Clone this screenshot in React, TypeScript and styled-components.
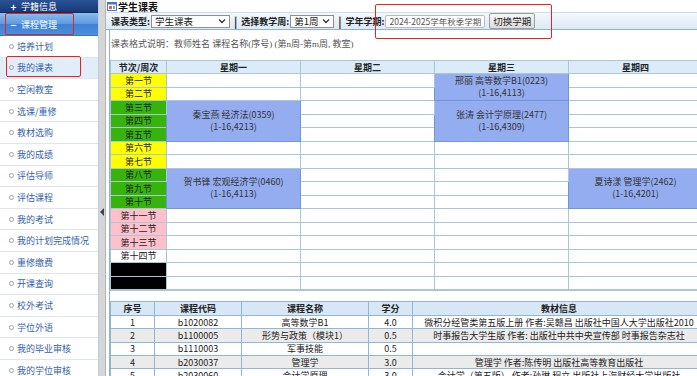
import styled, { createGlobalStyle } from 'styled-components';

type Tone = 'yellow' | 'green' | 'pink' | 'white' | 'black';

interface Course {
  start: number;
  span: number;
  title: string;
  info: string;
}

const menuItems = [
  '培养计划',
  '我的课表',
  '空闲教室',
  '选课/重修',
  '教材选购',
  '我的成绩',
  '评估导师',
  '评估课程',
  '我的考试',
  '我的计划完成情况',
  '重修缴费',
  '开课查询',
  '校外考试',
  '学位外语',
  '我的毕业审核',
  '我的学位审核',
];

const periods: { label: string; tone: Tone }[] = [
  { label: '第一节', tone: 'yellow' },
  { label: '第二节', tone: 'yellow' },
  { label: '第三节', tone: 'green' },
  { label: '第四节', tone: 'green' },
  { label: '第五节', tone: 'green' },
  { label: '第六节', tone: 'yellow' },
  { label: '第七节', tone: 'yellow' },
  { label: '第八节', tone: 'green' },
  { label: '第九节', tone: 'green' },
  { label: '第十节', tone: 'green' },
  { label: '第十一节', tone: 'pink' },
  { label: '第十二节', tone: 'pink' },
  { label: '第十三节', tone: 'pink' },
  { label: '第十四节', tone: 'white' },
  { label: '', tone: 'black' },
  { label: '', tone: 'black' },
];

// only the four days that fit in the visible width
const days = ['星期一', '星期二', '星期三', '星期四'];

const courses: Course[][] = [
  [
    { start: 2, span: 3, title: '秦宝燕 经济法(0359)', info: '(1-16,4213)' },
    { start: 7, span: 3, title: '贺书锋 宏观经济学(0460)', info: '(1-16,4113)' },
  ],
  [],
  [
    { start: 0, span: 2, title: '邢丽 高等数学B1(0223)', info: '(1-16,4113)' },
    { start: 2, span: 3, title: '张涛 会计学原理(2477)', info: '(1-16,4309)' },
  ],
  [{ start: 7, span: 3, title: '夏诗漾 管理学(2462)', info: '(1-16,4201)' }],
];

const books = [
  ['1', 'b1020082', '高等数学B1', '4.0', '微积分经管类第五版上册 作者:吴赣昌 出版社中国人大学出版社2010'],
  ['2', 'b1100005', '形势与政策（模块1）', '0.5', '时事报告大学生版 作者: 出版社中共中央宣传部 时事报告杂志社'],
  ['3', 'b1110003', '军事技能', '0.5', ''],
  ['4', 'b2030037', '管理学', '3.0', '管理学 作者:陈传明 出版社高等教育出版社'],
  ['5', 'b2030060', '会计学原理', '3.0', '会计学（第五版） 作者:孙琳 程立 出版社上海财经大学出版社'],
];

const toneColors: Record<Tone, string> = {
  yellow: '#ffff00',
  green: '#36b40c',
  pink: '#ffc0cb',
  white: '#ffffff',
  black: '#000000',
};

function Chevron() {
  return (
    <svg width="8" height="6" viewBox="0 0 8 6">
      <path d="M1 1.5 L4 4.5 L7 1.5" fill="none" stroke="#333" strokeWidth="1.3" />
    </svg>
  );
}

function WindowIcon() {
  return (
    <svg width="10" height="9" viewBox="0 0 10 9">
      <rect x="0.5" y="0.5" width="9" height="8" fill="#fff" stroke="#4a78c0" />
      <rect x="0.5" y="0.5" width="9" height="2" fill="#4a78c0" />
      <rect x="2" y="4" width="3" height="3" fill="#e05a6a" />
      <rect x="6" y="4" width="2" height="3" fill="#7aa3e0" />
    </svg>
  );
}

function ScheduleRows() {
  return (
    <>
      {periods.map((p, r) => (
        <tr key={r}>
          <PeriodCell $tone={p.tone}>{p.label}</PeriodCell>
          {days.map((_, d) => {
            const list = courses[d];
            const starting = list.find((c) => c.start === r);
            if (starting) {
              return (
                <CourseCell key={d} rowSpan={starting.span}>
                  {starting.title}
                  <br />
                  {starting.info}
                </CourseCell>
              );
            }
            const covered = list.some((c) => r > c.start && r < c.start + c.span);
            if (covered) return null;
            return <DayCell key={d} />;
          })}
        </tr>
      ))}
    </>
  );
}

export default function App() {
  return (
    <Page>
      <GlobalStyle />
      <Sidebar>
        <GroupHeader $variant="dark">
          <Sign>+</Sign>学籍信息
        </GroupHeader>
        <GroupHeader $variant="open">
          <Sign>−</Sign>课程管理
        </GroupHeader>
        {menuItems.map((m) => (
          <MenuItem key={m} $active={m === '我的课表'}>
            <Bullet />
            {m}
          </MenuItem>
        ))}
      </Sidebar>
      <Splitter>
        <Arrow />
      </Splitter>
      <Main>
        <TitleBar>
          <WindowIcon />
          学生课表
        </TitleBar>
        <Toolbar>
          <FieldLabel>课表类型:</FieldLabel>
          <SelectBox $width={79}>
            学生课表
            <Chevron />
          </SelectBox>
          <Divider>|</Divider>
          <FieldLabel>选择教学周:</FieldLabel>
          <SelectBox $width={44}>
            第1周
            <Chevron />
          </SelectBox>
          <Divider>|</Divider>
          <FieldLabel>学年学期:</FieldLabel>
          <SemesterInput>2024-2025学年秋季学期</SemesterInput>
          <SwitchButton>切换学期</SwitchButton>
        </Toolbar>
        <Content>
          <ScheduleSection>
            <Note>课表格式说明：教师姓名 课程名称(序号) (第n周-第m周, 教室)</Note>
            <ScheduleTable>
              <colgroup>
                <col width={56} />
                {days.map((d) => (
                  <col key={d} width={134} />
                ))}
              </colgroup>
              <thead>
                <tr>
                  <HeadCell>节次/周次</HeadCell>
                  {days.map((d) => (
                    <HeadCell key={d}>{d}</HeadCell>
                  ))}
                </tr>
              </thead>
              <tbody>
                <ScheduleRows />
              </tbody>
            </ScheduleTable>
          </ScheduleSection>
          <BookSection>
            <BookTable>
              <colgroup>
                <col width={44} />
                <col width={87} />
                <col width={127} />
                <col width={44} />
                <col />
              </colgroup>
              <thead>
                <tr>
                  <BookHead>序号</BookHead>
                  <BookHead>课程代码</BookHead>
                  <BookHead>课程名称</BookHead>
                  <BookHead>学分</BookHead>
                  <BookHead>教材信息</BookHead>
                </tr>
              </thead>
              <tbody>
                {books.map((row, i) => (
                  <BookRow key={row[0]} $striped={i % 2 === 1}>
                    {row.map((c, j) => (
                      <BookCell key={j}>{c}</BookCell>
                    ))}
                  </BookRow>
                ))}
              </tbody>
            </BookTable>
          </BookSection>
        </Content>
      </Main>
      <Annotation $x={5} $y={13} $w={69} $h={22} />
      <Annotation $x={6} $y={56} $w={75} $h={21} />
      <Annotation $x={375} $y={4} $w={177} $h={35} />
    </Page>
  );
}

// Styles
const GlobalStyle = createGlobalStyle`
  html, body {
    margin: 0;
    padding: 0;
    width: 697px;
    height: 376px;
    overflow: hidden;
    background: #fff;
  }
  body {
    font-family: "Noto Sans CJK SC", "Noto Sans", sans-serif;
    color: #222;
  }
`;

const Page = styled.div`
  position: relative;
  display: flex;
  width: 697px;
  height: 376px;
  overflow: hidden;
`;

const Sidebar = styled.nav`
  width: 98px;
  flex-shrink: 0;
  background: #fff;
  border-right: 1px solid #bccfe3;
  overflow: hidden;
`;

const GroupHeader = styled.div<{ $variant: 'dark' | 'open' }>`
  display: flex;
  align-items: center;
  gap: 4px;
  padding-left: 10px;
  color: #fff;
  font-size: 9px;
  height: ${(p) => (p.$variant === 'dark' ? '12px' : '22px')};
  background: ${(p) =>
    p.$variant === 'dark'
      ? 'linear-gradient(#2a5295, #163a78)'
      : 'linear-gradient(#8bbcee, #5d9ce2 48%, #3f81d3 52%, #4b8fdd)'};
  border-bottom: 1px solid ${(p) => (p.$variant === 'dark' ? '#0f2d63' : '#3a76c2')};
`;

const Sign = styled.span`
  width: 7px;
  font-size: 10px;
  font-weight: bold;
  text-align: center;
`;

const MenuItem = styled.div<{ $active: boolean }>`
  display: flex;
  align-items: center;
  gap: 3px;
  height: 21.6px;
  box-sizing: border-box;
  padding-left: 9px;
  font-size: 9px;
  color: #3363ad;
  background: ${(p) => (p.$active ? '#e2edfa' : '#fff')};
  border-bottom: 1px solid #dce6f0;
  white-space: nowrap;
`;

const Bullet = styled.span`
  width: 3px;
  height: 3px;
  border: 1px solid #9aa5b0;
  border-radius: 50%;
`;

const Splitter = styled.div`
  width: 7px;
  flex-shrink: 0;
  background: #d6d6d6;
  border-right: 1px solid #b4b4b4;
  padding-top: 208px;
  box-sizing: border-box;
  display: flex;
  justify-content: center;
`;

const Arrow = styled.span`
  width: 0;
  height: 0;
  border-top: 4px solid transparent;
  border-bottom: 4px solid transparent;
  border-right: 4px solid #444;
`;

const Main = styled.main`
  flex: 1;
  min-width: 0;
  display: flex;
  flex-direction: column;
  overflow: hidden;
`;

const TitleBar = styled.div`
  height: 12px;
  display: flex;
  align-items: center;
  gap: 1px;
  padding-left: 1px;
  font-size: 10px;
  font-weight: bold;
  color: #111;
  border-bottom: 1px solid #d5dbe2;
`;

const Toolbar = styled.div`
  height: 20px;
  display: flex;
  align-items: center;
  padding-left: 5px;
  background: linear-gradient(#f3f8fd, #dde9f6);
  border-bottom: 1px solid #8fb1d2;
  white-space: nowrap;
`;

const FieldLabel = styled.span`
  font-size: 9px;
  font-weight: bold;
  color: #222;
`;

const SelectBox = styled.div<{ $width: number }>`
  width: ${(p) => p.$width}px;
  height: 13px;
  box-sizing: border-box;
  margin-left: 1px;
  display: flex;
  align-items: center;
  justify-content: space-between;
  padding: 0 3px;
  border: 1px solid #8f8f8f;
  background: #fff;
  font-size: 9.5px;
`;

const Divider = styled.span`
  font-size: 11px;
  font-weight: bold;
  margin: 0 4px;
`;

const SemesterInput = styled.div`
  width: 100px;
  height: 13px;
  box-sizing: border-box;
  margin-left: 1px;
  border: 1px solid #b9b9b9;
  border-radius: 2px;
  background: #fff;
  font-size: 8.5px;
  color: #555;
  display: flex;
  align-items: center;
  justify-content: center;
`;

const SwitchButton = styled.div`
  margin-left: 4px;
  height: 16px;
  box-sizing: border-box;
  padding: 0 3px;
  display: flex;
  align-items: center;
  border: 1px solid #9c9c9c;
  border-radius: 2px;
  background: linear-gradient(#f6f6f6, #dcdcdc);
  font-size: 9.5px;
  color: #222;
`;

const Content = styled.div`
  flex: 1;
  margin-left: 3px;
  border-left: 1px solid #8fb1d2;
  background: #fff;
`;

const ScheduleSection = styled.section`
  padding-top: 8px;
  border-bottom: 1px solid #a9c7d8;
`;

const Note = styled.div`
  height: 12px;
  line-height: 12px;
  margin-bottom: 10px;
  padding-left: 1px;
  font-family: "Liberation Serif", "Noto Sans CJK SC", serif;
  font-size: 9px;
  color: #555;
  white-space: nowrap;
`;

const ScheduleTable = styled.table`
  border-collapse: collapse;
  table-layout: fixed;
  width: 592px;
  font-size: 9px;
  line-height: 11px;

  td,
  th {
    border: 1px solid #a9c7d8;
    padding: 0;
    text-align: center;
    white-space: nowrap;
  }
  tbody tr {
    height: 13.5px;
  }
`;

const HeadCell = styled.th`
  height: 12px;
  background: #dcebf8;
  font-weight: bold;
  color: #222;
`;

const PeriodCell = styled.td<{ $tone: Tone }>`
  background: ${(p) => toneColors[p.$tone]};
  color: #222;
`;

const DayCell = styled.td`
  background: #fff;
`;

const CourseCell = styled.td`
  && {
    border: 1px solid #6c98d6;
  }
  background: #94adf1;
  color: #333;
  line-height: 12px;
  vertical-align: middle;
`;

const BookSection = styled.section`
  padding-top: 10px;
`;

const BookTable = styled.table`
  border-collapse: collapse;
  table-layout: fixed;
  width: 596px;
  font-size: 9px;
  line-height: 11px;

  td,
  th {
    border: 1px solid #8fb8d6;
    padding: 0;
    text-align: center;
    white-space: nowrap;
    overflow: hidden;
  }
`;

const BookHead = styled.th`
  height: 13px;
  background: #d7e7f6;
  font-weight: bold;
  color: #222;
`;

const BookRow = styled.tr<{ $striped: boolean }>`
  height: 13.3px;
  background: ${(p) => (p.$striped ? '#ebebeb' : '#fff')};
`;

const BookCell = styled.td`
  color: #222;
`;

const Annotation = styled.div<{ $x: number; $y: number; $w: number; $h: number }>`
  position: absolute;
  left: ${(p) => p.$x}px;
  top: ${(p) => p.$y}px;
  width: ${(p) => p.$w}px;
  height: ${(p) => p.$h}px;
  box-sizing: border-box;
  border: 1.5px solid #e8231f;
  border-radius: 2px;
  pointer-events: none;
`;
